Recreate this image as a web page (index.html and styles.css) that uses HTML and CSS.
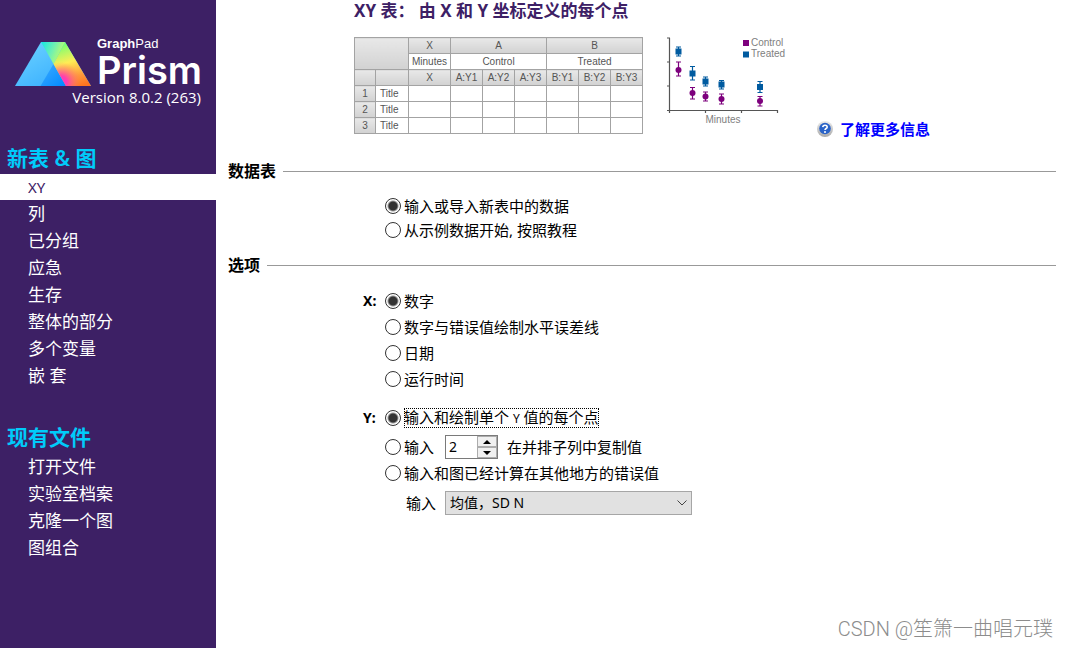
FILE: index.html
```html
<!DOCTYPE html>
<html lang="zh-CN">
<head>
<meta charset="utf-8">
<meta name="viewport" content="width=device-width, initial-scale=1">
<title>GraphPad Prism</title>
<link rel="stylesheet" href="styles.css">
</head>
<body>
<aside class="sidebar">
  <div class="brand">
    <svg class="brand-mark" viewBox="0 0 76 44" aria-hidden="true">
      <defs>
        <linearGradient id="left" x1="0" y1="0" x2="1" y2="1"><stop offset="0" stop-color="#6fd4ff"/><stop offset="1" stop-color="#2aa5ff"/></linearGradient>
        <linearGradient id="base" x1="0" y1="0" x2="1" y2="1"><stop offset="0" stop-color="#3eacff"/><stop offset="1" stop-color="#0088ff"/></linearGradient>
        <linearGradient id="top" x1="0" y1="0" x2="1" y2="0.4"><stop offset="0" stop-color="#12e6e6"/><stop offset=".55" stop-color="#72f0b0"/><stop offset="1" stop-color="#c8ff60"/></linearGradient>
        <linearGradient id="hue" gradientUnits="userSpaceOnUse" x1="52" y1="2" x2="66" y2="44"><stop offset="0" stop-color="#7dff70"/><stop offset=".4" stop-color="#ffed55"/><stop offset=".75" stop-color="#ff9a3c"/><stop offset="1" stop-color="#ff7420"/></linearGradient>
        <radialGradient id="pink" gradientUnits="userSpaceOnUse" cx="46" cy="40" r="20"><stop offset="0" stop-color="#ff2fd0"/><stop offset=".3" stop-color="#ff3fb0"/><stop offset="1" stop-color="#ff8060" stop-opacity="0"/></radialGradient>
      </defs>
      <path d="M26 0H50L76 44H0Z" fill="url(#left)"/>
      <path d="M38.500 22L51 44H25.500Z" fill="url(#base)"/>
      <path d="M26 0H50L38.500 22Z" fill="url(#top)"/>
      <path d="M50 0L76 44H51L38.500 22Z" fill="url(#hue)"/>
      <path d="M50 0L76 44H51L38.500 22Z" fill="url(#pink)"/>
    </svg>
    <div class="brand-name">
      <span class="maker"><b>Graph</b>Pad</span>
      <span class="product">Prism</span>
    </div>
  </div>
  <p class="version">Version 8.0.2 (263)</p>
  <nav class="nav">
    <h2 class="nav-title">新表 &amp; 图</h2>
    <ul class="nav-list">
      <li><a class="nav-link current" href="#xy">XY</a></li>
      <li><a class="nav-link" href="#column">列</a></li>
      <li><a class="nav-link" href="#grouped">已分组</a></li>
      <li><a class="nav-link" href="#contingency">应急</a></li>
      <li><a class="nav-link" href="#survival">生存</a></li>
      <li><a class="nav-link" href="#parts">整体的部分</a></li>
      <li><a class="nav-link" href="#multiple">多个变量</a></li>
      <li><a class="nav-link" href="#nested">嵌 套</a></li>
    </ul>
    <h2 class="nav-title">现有文件</h2>
    <ul class="nav-list">
      <li><a class="nav-link" href="#open">打开文件</a></li>
      <li><a class="nav-link" href="#labarchives">实验室档案</a></li>
      <li><a class="nav-link" href="#clone">克隆一个图</a></li>
      <li><a class="nav-link" href="#portfolio">图组合</a></li>
    </ul>
  </nav>
</aside>
<main class="main">
  <header class="intro">
    <h1 class="title">XY 表： 由 X 和 Y 坐标定义的每个点</h1>
    <div class="preview">
      <table class="sheet">
        <colgroup><col class="c-num"><col class="c-title"><col class="c-x"><col class="c-y" span="6"></colgroup>
        <thead>
          <tr><th colspan="2" rowspan="2"></th><th>X</th><th colspan="3">A</th><th colspan="3">B</th></tr>
          <tr><td>Minutes</td><td colspan="3">Control</td><td colspan="3">Treated</td></tr>
          <tr><th></th><th></th><th>X</th><th>A:Y1</th><th>A:Y2</th><th>A:Y3</th><th>B:Y1</th><th>B:Y2</th><th>B:Y3</th></tr>
        </thead>
        <tbody>
          <tr><th>1</th><td class="row-title">Title</td><td></td><td></td><td></td><td></td><td></td><td></td><td></td></tr>
          <tr><th>2</th><td class="row-title">Title</td><td></td><td></td><td></td><td></td><td></td><td></td><td></td></tr>
          <tr><th>3</th><td class="row-title">Title</td><td></td><td></td><td></td><td></td><td></td><td></td><td></td></tr>
        </tbody>
      </table>
      <svg class="chart" viewBox="0 0 125 92" role="img" aria-label="Control / Treated">
        <path d="M2 1h3M2 25h3M2 49h3M2 73.500H113M4.500 1V76M40.500 73V76M76.500 73V76M112.500 73V76" fill="none" stroke="#555" stroke-width="1.200"/>
        <g stroke="#7d007d" stroke-width="1.200" fill="#7d007d">
          <path d="M13.500 25V39M11 25h5M11 39h5M27.500 50.500V62M25 50.500h5M25 62h5M40.500 55V64M38 55h5M38 64h5M56.500 57V67M54 57h5M54 67h5M95 59.500V69M92.500 59.500h5M92.500 69h5"/>
          <g stroke="none"><circle cx="13.500" cy="33" r="3"/><circle cx="27.500" cy="56" r="3"/><circle cx="40.500" cy="59.500" r="3"/><circle cx="56.500" cy="62" r="3"/><circle cx="95" cy="64" r="3"/></g>
        </g>
        <g stroke="#005ba0" stroke-width="1.200" fill="#005ba0">
          <path d="M13.500 10V19M11 10h5M11 19h5M27.500 29.500V43M25 29.500h5M25 43h5M40.500 40V49M38 40h5M38 49h5M56.500 43.500V52M54 43.500h5M54 52h5M95 44.500V55.500M92.500 44.500h5M92.500 55.500h5"/>
          <path stroke="none" d="M10.500 11.500h6v6h-6zM24.500 33.500h6v6h-6zM37.500 41.500h6v6h-6zM53.500 44.500h6v6h-6zM92 47h6v6h-6z"/>
        </g>
        <path d="M78 3h6v6h-6z" fill="#7d007d"/><path d="M78 14.500h6v6h-6z" fill="#005ba0"/>
        <g class="chart-text"><text x="86" y="9">Control</text><text x="86" y="20">Treated</text><text x="58" y="86" text-anchor="middle">Minutes</text></g>
      </svg>
      <a class="help" href="#learn">
        <svg class="help-icon" viewBox="0 0 16 16" aria-hidden="true">
          <defs><linearGradient id="rim" x1="0" y1="0" x2="0" y2="1"><stop offset="0" stop-color="#ececec"/><stop offset="1" stop-color="#a9a9a9"/></linearGradient></defs>
          <circle cx="8" cy="8" r="8" fill="url(#rim)"/><circle cx="8" cy="7.500" r="5.800" fill="#2a63c8"/>
          <path d="M5.800 6.100C5.900 3.500 10.200 3.600 10.200 6C10.200 7.500 8.100 7.500 8 9" fill="none" stroke="#fff" stroke-width="1.600"/><circle cx="8" cy="11" r="1" fill="#fff"/>
        </svg>
        <span>了解更多信息</span>
      </a>
    </div>
  </header>
  <form class="form">
    <h2 class="section">数据表</h2>
    <div class="group source" role="radiogroup" aria-label="数据表">
      <div class="options">
        <label class="option"><input type="radio" name="source" checked><span>输入或导入新表中的数据</span></label>
        <label class="option"><input type="radio" name="source"><span>从示例数据开始, 按照教程</span></label>
      </div>
    </div>
    <h2 class="section">选项</h2>
    <div class="group x-group" role="radiogroup" aria-labelledby="x-label">
      <span class="axis" id="x-label">X:</span>
      <div class="options">
        <label class="option"><input type="radio" name="x" checked><span>数字</span></label>
        <label class="option"><input type="radio" name="x"><span>数字与错误值绘制水平误差线</span></label>
        <label class="option"><input type="radio" name="x"><span>日期</span></label>
        <label class="option"><input type="radio" name="x"><span>运行时间</span></label>
      </div>
    </div>
    <div class="group y-group" role="radiogroup" aria-labelledby="y-label">
      <span class="axis" id="y-label">Y:</span>
      <div class="options">
        <label class="option"><input type="radio" name="y" checked><span class="focused">输入和绘制单个 <small>Y</small> 值的每个点</span></label>
        <div class="replicates">
          <label class="option"><input type="radio" name="y"><span>输入</span></label>
          <div class="spinner">
            <input class="spin-value" id="count" type="text" inputmode="numeric" value="2">
            <div class="spin-buttons">
              <button class="spin" type="button" aria-label="增加"><svg viewBox="0 0 8 4"><path d="M0 4L4 0L8 4Z"/></svg></button>
              <button class="spin" type="button" aria-label="减少"><svg viewBox="0 0 8 4"><path d="M0 0L4 4L8 0Z"/></svg></button>
            </div>
          </div>
          <label for="count">在并排子列中复制值</label>
        </div>
        <label class="option"><input type="radio" name="y"><span>输入和图已经计算在其他地方的错误值</span></label>
        <div class="entry">
          <label for="stat">输入</label>
          <div class="select-box">
            <select class="select" id="stat"><option>均值，SD N</option></select>
            <svg class="chevron" viewBox="0 0 10 6" aria-hidden="true"><path d="M.5.500L5 5L9.500.500" fill="none" stroke="#444"/></svg>
          </div>
        </div>
      </div>
    </div>
  </form>
</main>
<div class="watermark">CSDN @笙箫一曲唱元璞</div>
</body>
</html>
```
FILE: styles.css
```css
* { box-sizing: border-box; }
body {
  margin: 0;
  min-height: 100vh;
  display: flex;
  position: relative;
  background: #fff;
  color: #000;
  font: 15px/20px "Noto Sans", "Noto Sans CJK SC", sans-serif;
}
h1, h2, p, ul { margin: 0; padding: 0; }
ul { list-style: none; }

.sidebar {
  flex: 0 0 216px;
  min-width: 0;
  padding-top: 36px;
  background: #3d2065;
  color: #fff;
}
.brand { display: flex; gap: 6px; padding: 0 14px 0 15px; }
.brand-mark { flex: none; width: 76px; height: 44px; margin-top: 6px; }
.brand-name { display: flex; flex-direction: column; min-width: 0; }
.maker { font: 13px/16px "Liberation Sans", Arial, sans-serif; }
.product { font: 600 38px/36px Inter, "Liberation Sans", sans-serif; }
.version { padding-right: 15px; text-align: right; font: 15px/18px "Open Sans", "Noto Sans", sans-serif; }
.nav { padding-top: 38px; }
.nav-title {
  padding-left: 7px;
  font-size: 21px;
  font-weight: 600;
  line-height: 28px;
  padding-bottom: 2px;
  color: #00cbfa;
}
.nav-list + .nav-title { margin-top: 34px; }
.nav-link {
  display: block;
  padding-left: 28px;
  color: #fff;
  font-size: 17px;
  line-height: 27px;
  text-decoration: none;
}
.current { background: #fff; color: #3d2065; font-size: 15px; line-height: 26px; }

.main { flex: 1; min-width: 0; padding: 0 12px; }
.intro { padding-left: 126px; }
.title { font: 700 17px/22px "Noto Sans", "Noto Sans CJK SC", sans-serif; color: #3d2065; }
.preview { display: flex; align-items: flex-start; margin-top: 15px; }
.sheet {
  flex: none;
  width: 288px;
  table-layout: fixed;
  border-collapse: collapse;
  font: 10px/12px "Liberation Sans", Arial, sans-serif;
  color: #555;
  text-align: center;
}
.c-num { width: 21px; }
.c-title { width: 33px; }
.c-x { width: 42px; }
.c-y { width: 32px; }
.sheet tr { height: 16px; }
.sheet th, .sheet td { padding: 0; border: 1px solid #a3a3a3; font-weight: 400; white-space: nowrap; }
.sheet th { background: linear-gradient(#e8e8e8, #d2d2d2); }
.sheet .row-title { padding-left: 4px; text-align: left; }
.chart { flex: none; width: 125px; height: 92px; margin-left: 22px; }
.chart-text { font: 10px "Liberation Sans", Arial, sans-serif; fill: #808080; }
.help {
  display: flex;
  align-items: center;
  gap: 7px;
  margin: 82px 0 0 27px;
  color: #00f;
  font-weight: 700;
  text-decoration: none;
}
.help-icon { width: 16px; height: 16px; }

.form { margin-top: 22px; }
.section {
  display: flex;
  align-items: center;
  gap: 7px;
  font-size: 16px;
  line-height: 20px;
}
.section::after { content: ""; flex: 1; height: 1px; background: #999; }
.group { display: flex; gap: 7px; padding-left: 135px; }
.source { padding: 13px 0 13px 157px; }
.source .option { min-height: 24px; }
.x-group { margin-top: 13px; }
.y-group { margin-top: 13px; }
.axis { width: 15px; font-size: 14px; line-height: 26px; font-weight: 700; }
.options { display: flex; flex-direction: column; align-items: flex-start; }
.option { display: flex; align-items: center; gap: 3px; min-height: 26px; }
.option input {
  appearance: none;
  flex: none;
  width: 16px;
  height: 16px;
  margin: 0;
  border: 1px solid #333;
  border-radius: 50%;
  background: #fff;
}
.option input:checked { background: radial-gradient(circle, #333 0 4px, #fff 6px); }
.focused { line-height: 18px; outline: 1px dotted #000; outline-offset: -1px; }
.focused small { font-size: 12px; }
.replicates { display: flex; align-items: center; gap: 9px; margin-top: 3px; }
.replicates .option { width: 51px; }
.spinner {
  display: flex;
  width: 53px;
  height: 24px;
  border: 1px solid #7a7a7a;
  background: #fff;
}
.spin-value {
  flex: 1;
  min-width: 0;
  padding: 0 3px;
  border: 0;
  background: none;
  font: 14px/20px "Noto Sans", sans-serif;
}
.spin-buttons { display: flex; flex-direction: column; width: 20px; }
.spin {
  flex: 1;
  display: flex;
  align-items: center;
  justify-content: center;
  padding: 0;
  border: 1px solid #acacac;
  background: #f0f0f0;
}
.spin svg { width: 8px; height: 4px; }
.entry { display: flex; align-items: center; gap: 9px; margin: 5px 0 0 21px; }
.select-box { position: relative; }
.select {
  appearance: none;
  display: block;
  width: 247px;
  height: 24px;
  padding: 0 4px;
  border: 1px solid #a6a6a6;
  border-radius: 0;
  background: #e1e1e1;
  color: #000;
  font: 14px/20px "Noto Sans", "Noto Sans CJK SC", sans-serif;
}
.chevron { position: absolute; right: 5px; top: 9px; width: 10px; height: 6px; pointer-events: none; }

.watermark {
  position: absolute;
  right: 15px;
  bottom: 5px;
  color: #8c8c8c;
  font: 300 20px/28px Roboto, "Noto Sans CJK SC", sans-serif;
}
```
